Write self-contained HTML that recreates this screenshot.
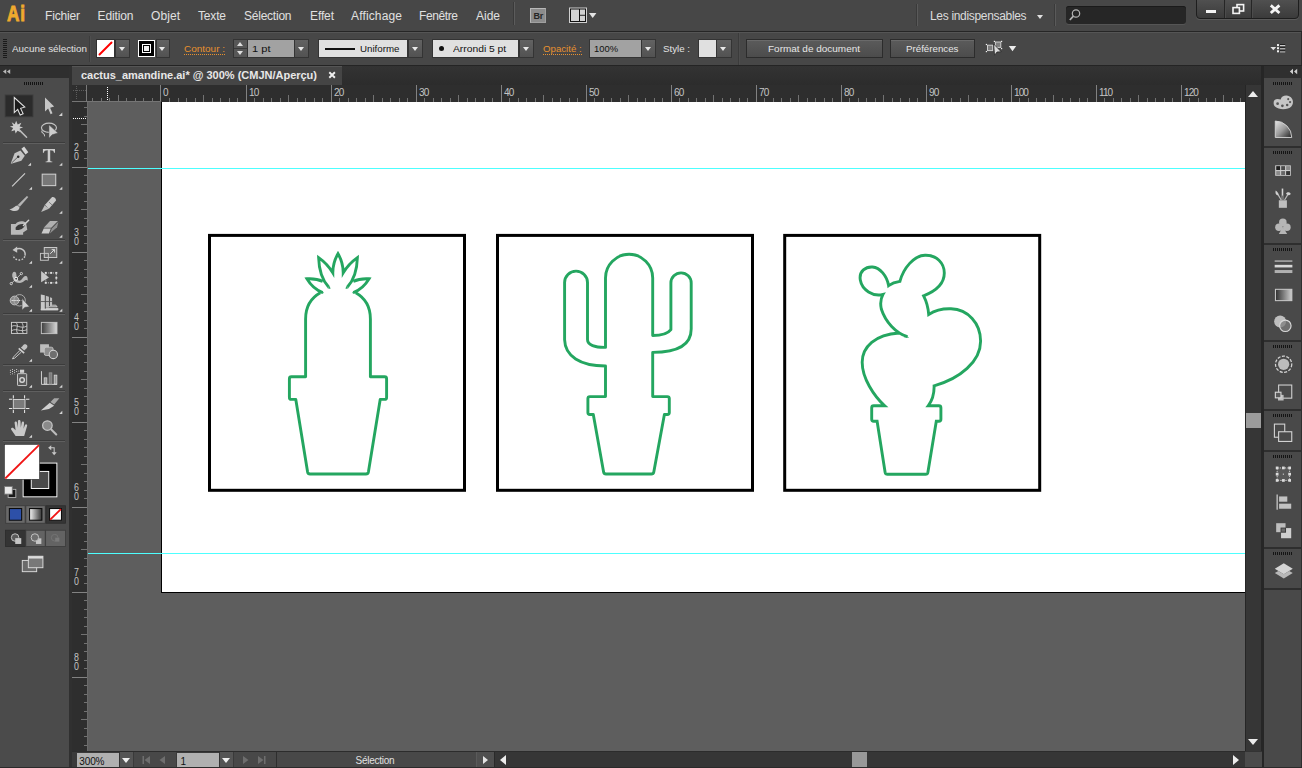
<!DOCTYPE html>
<html><head><meta charset="utf-8"><title>Ai</title>
<style>
*{box-sizing:border-box;margin:0;padding:0}
html,body{width:1302px;height:768px;overflow:hidden;background:#5e5e5e;font-family:"Liberation Sans",sans-serif;font-size:11px;color:#e6e6e6}
.a{position:absolute}
.tx{position:absolute;white-space:nowrap}
#menubar{left:0;top:0;width:1302px;height:31px;background:#474747}
#ctrl{left:0;top:31px;width:1302px;height:35px;background:#474747;border-top:1px solid #262626;border-bottom:1px solid #242424;box-shadow:inset 0 1px 0 #555}
.dd{position:absolute;background:#595959;border:1px solid #343434}
.dd{background:linear-gradient(#626262,#525252)}
.dd:after{content:"";position:absolute;left:50%;top:50%;margin-left:-3.8px;margin-top:-2px;border:3.8px solid transparent;border-top:4.6px solid #e8e8e8;border-bottom:none}
.fld{position:absolute;background:#a2a2a2;border:1px solid #343434}
.lfd{position:absolute;background:#e0e0e0;border:1px solid #343434}
.btn{position:absolute;background:linear-gradient(#5b5b5b,#4c4c4c);border:1px solid #2c2c2c;box-shadow:inset 0 1px 0 #6a6a6a}
.dot{position:absolute;border-bottom:1px dotted #e8912f;height:1px}
#tabbar{left:72px;top:66px;width:1190px;height:19px;background:linear-gradient(#333,#2c2c2c)}
#tab{left:72px;top:66px;width:270px;height:19px;background:#454545;border-top:1px solid #555}
#left{left:0;top:66px;width:69px;height:702px;background:#4b4b4b}
#lefthead{left:0;top:66px;width:69px;height:12px;background:#2f2f2f}
#lsep{left:69px;top:66px;width:3px;height:702px;background:#303030}
#hruler{left:72px;top:85px;width:1173px;height:17px;background:#2e2e2e;overflow:hidden}
#hruler i{position:absolute;width:1px;background:#727272}
#hruler i.M{background:#828282}
#hruler b{position:absolute;top:2px;font-weight:normal;font-size:10px;line-height:11px;color:#c4c4c4;letter-spacing:-0.9px}
#vruler{left:72px;top:102px;width:15px;height:649px;background:#2e2e2e;overflow:hidden}
#vruler i{position:absolute;height:1px;background:#727272}
#vruler i.M{background:#828282}
#vruler b{position:absolute;left:0.5px;width:7px;text-align:center;font-weight:normal;font-size:10px;line-height:10px;color:#c4c4c4;transform:scaleX(0.88)}
#canvas{left:87px;top:102px;width:1158px;height:649px;background:#5e5e5e;overflow:hidden}
#vscroll{left:1245px;top:85px;width:17px;height:666px;background:#363636;border-left:1px solid #262626}
#rsep{left:1261px;top:66px;width:3px;height:702px;background:#262626}
#right{left:1264px;top:66px;width:38px;height:702px;background:#494949;border-right:1px solid #2e2e2e}
#righthead{left:1264px;top:66px;width:38px;height:12px;background:#2f2f2f}
#status{left:72px;top:751px;width:1173px;height:17px;background:#3a3a3a;border-top:1px solid #2c2c2c}
.grip{position:absolute;height:3px;width:20px;background:repeating-linear-gradient(90deg,#141414 0,#141414 1px,transparent 1px,transparent 2px)}
.hl{position:absolute;height:1px;background:#5f5f5f;box-shadow:0 -1px 0 #3c3c3c}
.rs{position:absolute;left:1264px;width:38px;height:2px;background:#2e2e2e}
.cm{position:absolute;width:0;height:0;border:2.5px solid transparent;border-right-color:#d0d0d0;border-bottom-color:#d0d0d0}
svg{position:absolute;overflow:visible}
</style></head><body>
<div id="menubar" class="a"></div>
<div id="ctrl" class="a"></div>
<span class="tx" style="left:7px;top:2px;font-size:22px;line-height:24px;font-weight:bold;transform-origin:0 0;transform:scaleX(0.78);color:#eeaa2e;-webkit-text-stroke:0.9px #eeaa2e;letter-spacing:1px">Ai</span>
<div class="a" style="left:514px;top:2px;width:1px;height:23px;background:#5c5c5c;box-shadow:-1px 0 0 #3a3a3a"></div>
<div class="a" style="left:530px;top:8px;width:16px;height:15px;background:#8c8c8c;border:1px solid #b8b8b8;border-right-color:#a0a0a0;border-bottom-color:#a0a0a0"></div>
<span class="tx" style="left:533.5px;top:9.5px;font-size:9px;line-height:12px;font-weight:bold;color:#262626;letter-spacing:-0.3px">Br</span>
<svg width="30" height="18" viewBox="568 6 30 18" style="left:568px;top:6px">
<rect x="569.5" y="8" width="17" height="14.5" fill="#111" stroke="#d0d0d0" stroke-width="1"/>
<rect x="571" y="9.5" width="8" height="11.5" fill="#d2d2d2"/><rect x="580" y="9.5" width="5" height="5.3" fill="#d2d2d2"/><rect x="580" y="15.7" width="5" height="5.3" fill="#d2d2d2"/>
<path d="M589 13 L596.4 13 L592.7 18 Z" fill="#e4e4e4"/>
</svg>
<div class="a" style="left:917px;top:4px;width:1px;height:22px;background:#5a5a5a;box-shadow:-1px 0 0 #3a3a3a"></div>
<div class="a" style="left:1037px;top:15px;border:3.2px solid transparent;border-top:4px solid #e0e0e0;border-bottom:none"></div>
<div class="a" style="left:1055px;top:4px;width:1px;height:22px;background:#5a5a5a;box-shadow:-1px 0 0 #3a3a3a"></div>
<div class="a" style="left:1066px;top:6px;width:120px;height:18px;background:#262626;border-radius:3px;box-shadow:inset 0 1px 0 #1a1a1a,0 1px 0 #555"></div>
<svg width="14" height="14" viewBox="0 0 14 14" style="left:1068px;top:8px"><circle cx="8" cy="5.5" r="3.7" fill="none" stroke="#b4b4b4" stroke-width="1.2"/><path d="M5.4 8.2 L1.8 12" stroke="#b4b4b4" stroke-width="1.7"/></svg>
<div class="a" style="left:1196px;top:-1px;width:103px;height:20px;background:linear-gradient(#505050,#3b3b3b);border:1px solid #1e1e1e;border-radius:0 0 4px 4px;box-shadow:0 1px 0 #5a5a5a"></div>
<div class="a" style="left:1224px;top:0;width:1px;height:18px;background:#262626;box-shadow:1px 0 0 #4c4c4c"></div>
<div class="a" style="left:1251px;top:0;width:1px;height:18px;background:#262626;box-shadow:1px 0 0 #4c4c4c"></div>
<svg width="103" height="20" viewBox="1196 0 103 20" style="left:1196px;top:0">
<rect x="1206" y="10" width="10" height="3" fill="#f4f4f4"/>
<rect x="1237" y="4.6" width="6.6" height="6.4" fill="none" stroke="#f4f4f4" stroke-width="1.6"/>
<rect x="1233" y="7.6" width="6.4" height="5.8" fill="#444" stroke="#f4f4f4" stroke-width="1.6"/>
<path d="M1270.8 5.4 L1279.4 13 M1279.4 5.4 L1270.8 13" stroke="#f4f4f4" stroke-width="2.8"/>
</svg>
<!-- control bar right icons -->
<svg width="36" height="20" viewBox="984 38 36 20" style="left:984px;top:38px">
<rect x="987.5" y="45.2" width="5.2" height="5.4" fill="#7e7e7e" stroke="#cdcdcd" stroke-width="1"/>
<rect x="995.4" y="42" width="5.4" height="5.4" fill="#7e7e7e" stroke="#cdcdcd" stroke-width="1"/>
<g fill="#f0f0f0"><rect x="985.8" y="43.9" width="1.2" height="1.2"/><rect x="985.8" y="51" width="1.2" height="1.2"/><rect x="993.8" y="40.8" width="1.2" height="1.2"/><rect x="1001" y="40.8" width="1.2" height="1.2"/><rect x="1001" y="48" width="1.2" height="1.2"/></g>
<path d="M993.6 44 L1001.2 51.7 L997 52 L994.6 55.2 Z" fill="#dadada" stroke="#1e1e1e" stroke-width="0.7"/>
<path d="M1008.8 46 L1016.2 46 L1012.5 51.2 Z" fill="#ececec"/>
</svg>
<svg width="20" height="14" viewBox="1268 41 20 14" style="left:1268px;top:41px">
<path d="M1270.4 47 L1276.2 47 L1273.3 50.2 Z" fill="#e4e4e4"/>
<g fill="#f2f2f2"><rect x="1277" y="44.1" width="2" height="2"/><rect x="1277" y="47.2" width="2" height="2"/><rect x="1277" y="50.3" width="2" height="2"/>
<rect x="1280" y="45.1" width="5.2" height="1"/><rect x="1280" y="48.2" width="5.2" height="1"/><rect x="1280" y="51.3" width="5.2" height="1"/></g>
<g fill="#1c1c1c"><rect x="1280" y="44.1" width="5.2" height="1"/><rect x="1280" y="47.2" width="5.2" height="1"/><rect x="1280" y="50.3" width="5.2" height="1"/></g>
</svg>
<div class="a" style="left:1301px;top:32px;width:1px;height:33px;background:#2a2a2a"></div>

<div class="a" style="left:96px;top:39px;width:19px;height:19px;background:#fff;border:1px solid #303030"><svg width="17" height="17" style="left:0;top:0"><path d="M2.5 14.5 L14.5 2.5" stroke="#f00" stroke-width="2" stroke-linecap="round"/></svg></div>
<div class="dd" style="left:115px;top:39px;width:15px;height:19px"></div>
<div class="a" style="left:138px;top:40px;width:17px;height:17px;background:#000;border:1px solid #fff"><div class="a" style="left:3px;top:3px;width:9px;height:9px;border:1px solid #fff;background:#000"><div class="a" style="left:1px;top:1px;width:5px;height:5px;background:#eee"></div></div></div>
<div class="dd" style="left:156px;top:39px;width:14px;height:19px"></div>
<div class="dot" style="left:184px;top:54px;width:41px"></div>
<div class="a" style="left:233px;top:39px;width:15px;height:19px;background:#575757;border:1px solid #343434"><div class="a" style="left:3px;top:2px;border:3.5px solid transparent;border-bottom:4px solid #dedede;border-top:none"></div><div class="a" style="left:0;top:8px;width:13px;height:1px;background:#3a3a3a"></div><div class="a" style="left:3px;top:11px;border:3.5px solid transparent;border-top:4px solid #dedede;border-bottom:none"></div></div>
<div class="fld" style="left:247px;top:39px;width:48px;height:19px"></div>
<div class="dd" style="left:294px;top:39px;width:15px;height:19px"></div>
<div class="lfd" style="left:318px;top:39px;width:90px;height:19px"><div class="a" style="left:6px;top:7.5px;width:30px;height:2px;background:#111"></div></div>
<div class="dd" style="left:408px;top:39px;width:15px;height:19px"></div>
<div class="lfd" style="left:432px;top:39px;width:87px;height:19px"><div class="a" style="left:6px;top:6px;width:5px;height:5px;border-radius:3px;background:#111"></div></div>
<div class="dd" style="left:519px;top:39px;width:15px;height:19px"></div>
<div class="dot" style="left:543px;top:54px;width:39px"></div>
<div class="fld" style="left:589px;top:39px;width:53px;height:19px"></div>
<div class="dd" style="left:641px;top:39px;width:15px;height:19px"></div>
<div class="lfd" style="left:698px;top:39px;width:19px;height:19px"></div>
<div class="dd" style="left:716px;top:39px;width:16px;height:19px"></div>
<div class="a" style="left:738px;top:33px;width:1px;height:32px;background:#3b3b3b;box-shadow:1px 0 0 #4d4d4d"></div>
<div class="a" style="left:89px;top:36px;width:1px;height:26px;background:#3c3c3c;box-shadow:1px 0 0 #4e4e4e"></div>
<div class="btn" style="left:746px;top:39px;width:137px;height:19px"></div>
<div class="btn" style="left:890px;top:39px;width:85px;height:19px"></div>
<div class="a" style="left:3px;top:39px;width:4px;height:19px;background:repeating-linear-gradient(180deg,#1a1a1a 0,#1a1a1a 1px,transparent 1px,transparent 2px)"></div>
<div id="tabbar" class="a"></div><div id="tab" class="a"></div>
<svg width="9" height="9" style="left:328px;top:71px"><path d="M1.3 1.3 L6.9 6.7 M6.9 1.3 L1.3 6.7" stroke="#f0f0f0" stroke-width="1.9"/></svg>
<div id="left" class="a"></div><div id="lefthead" class="a"></div><div id="lsep" class="a"></div>
<div class="grip" style="left:24px;top:82px"></div>
<div class="hl" style="left:3px;top:143px;width:62px"></div>
<div class="hl" style="left:3px;top:240px;width:62px"></div>
<div class="hl" style="left:3px;top:314px;width:62px"></div>
<div class="hl" style="left:3px;top:365px;width:62px"></div>
<div class="hl" style="left:3px;top:391px;width:62px"></div>
<div class="hl" style="left:3px;top:441px;width:62px"></div>
<svg width="72" height="702" viewBox="0 66 72 702" style="left:0;top:66px">
<defs>
<linearGradient id="gv" x1="0" y1="0" x2="0" y2="1"><stop offset="0" stop-color="#dcdcdc"/><stop offset="1" stop-color="#a8a8a8"/></linearGradient>
<linearGradient id="gh" x1="0" y1="0" x2="1" y2="0"><stop offset="0" stop-color="#3c3c3c"/><stop offset="1" stop-color="#d8d8d8"/></linearGradient>
<linearGradient id="gh2" x1="0" y1="0" x2="1" y2="0"><stop offset="0" stop-color="#f4f4f4"/><stop offset="1" stop-color="#333"/></linearGradient>
</defs>
<!-- Block A origin (0,64) -->
<g transform="translate(0,64) scale(0.1041667)">
<path d="M28 73 L60 50 L60 96 Z M66 73 L98 50 L98 96 Z" fill="#b8b8b8"/>
<rect x="50" y="298" width="266" height="208" fill="#2b2b2b" stroke="#3a3a3a" stroke-width="9"/>
<path d="M137 322 L137 466 L170 436 L194 490 L222 478 L198 426 L238 414 Z" fill="#1c1c1c" stroke="#e2e2e2" stroke-width="10" stroke-linejoin="miter"/>
<path d="M432 322 L432 456 L462 428 L486 482 L504 472 L481 420 L520 408 Z" fill="#c6c6c6"/>
<path d="M598 466 L598 499 L565 499 Z" fill="#d4d4d4"/>
<!-- magic wand -->
<path d="M155 545 L170 580 L205 565 L188 600 L222 608 L188 622 L200 655 L168 640 L150 668 L142 636 L108 645 L126 615 L95 600 L128 592 L112 560 L142 578 Z" fill="#cfcfcf"/>
<path d="M192 640 L255 703" stroke="#bdbdbd" stroke-width="15" stroke-linecap="round"/>
<!-- lasso -->
<ellipse cx="470" cy="612" rx="72" ry="44" fill="none" stroke="#c4c4c4" stroke-width="11"/>
<path d="M402 640 C390 668 436 658 428 694" fill="none" stroke="#c4c4c4" stroke-width="10"/>
<path d="M470 584 L470 712 L500 680 L556 662 Z" fill="#cdcdcd" stroke="#4f4f4f" stroke-width="5"/>
</g>
<!-- Block B origin (0,140) -->
<g transform="translate(0,140) scale(0.1041667)">
<!-- pen -->
<path d="M205 85 L232 62 L272 118 L245 138 Z" fill="#d4d4d4"/>
<path d="M196 100 L238 150 L205 200 L108 228 L104 222 L140 128 Z" fill="#c4c4c4"/>
<path d="M112 220 L172 162" stroke="#3a3a3a" stroke-width="7"/>
<circle cx="175" cy="160" r="12" fill="#2e2e2e"/>
<path d="M298 218 L298 248 L268 248 Z" fill="#d4d4d4"/>
<!-- T -->
<path d="M412 86 L528 86 L528 122 L518 122 C516 104 508 98 482 98 L482 196 C482 204 490 206 502 207 L502 213 L438 213 L438 207 C450 206 458 204 458 196 L458 98 C432 98 424 104 422 122 L412 122 Z" fill="#cdcdcd"/>
<path d="M598 218 L598 248 L568 248 Z" fill="#d4d4d4"/>
<!-- line -->
<path d="M116 446 L240 320" stroke="#d0d0d0" stroke-width="11"/>
<path d="M308 448 L308 478 L278 478 Z" fill="#d4d4d4"/>
<!-- rect -->
<rect x="405" y="328" width="130" height="110" fill="#787878" stroke="#cfcfcf" stroke-width="10"/>
<path d="M598 448 L598 478 L568 478 Z" fill="#d4d4d4"/>
<!-- brush -->
<path d="M258 538 L272 548 L190 640 L170 625 Z" fill="#b4b4b4"/>
<path d="M170 628 L188 648 C180 690 130 690 90 664 C130 660 140 630 170 628 Z" fill="#c8c8c8"/>
<!-- pencil -->
<path d="M500 548 C515 540 540 560 538 580 L470 660 L430 625 Z" fill="#c9c9c9"/>
<path d="M470 596 L505 628" stroke="#555" stroke-width="6"/>
<path d="M430 625 L470 660 L395 692 Z" fill="#bcbcbc"/>
<path d="M448 640 L425 620" stroke="#555" stroke-width="5"/>
<path d="M598 678 L598 708 L568 708 Z" fill="#d4d4d4"/>
</g>
<!-- Block C origin (0,214) -->
<g transform="translate(0,214) scale(0.1041667)">
<!-- blob brush -->
<path d="M105 95 L150 95 C170 70 215 60 250 85 L262 150 L222 178 L222 198 L105 198 Z" fill="#b9b9b9"/>
<path d="M150 130 C170 95 215 90 240 100 C235 140 185 160 150 150 Z" fill="#3a3a3a"/>
<path d="M225 110 L275 60" stroke="#d0d0d0" stroke-width="14" stroke-linecap="round"/>
<!-- eraser -->
<path d="M398 188 L420 140 L488 140 L470 188 Z" fill="#c9c9c9"/>
<path d="M420 132 L480 68 L556 68 L492 132 Z" fill="#b0b0b0"/>
<path d="M478 186 L498 138 L560 76 L548 128 Z" fill="#909090"/>
<path d="M598 198 L598 228 L568 228 Z" fill="#d4d4d4"/>
<!-- rotate -->
<path d="M150 340 C200 315 250 350 240 400" fill="none" stroke="#c6c6c6" stroke-width="14"/>
<path d="M120 345 L165 312 L165 372 Z" fill="#c6c6c6"/>
<path d="M238 405 C225 450 150 462 122 395" fill="none" stroke="#c6c6c6" stroke-width="14" stroke-dasharray="16 14"/>
<path d="M308 448 L308 478 L278 478 Z" fill="#d4d4d4"/>
<!-- scale -->
<rect x="425" y="322" width="120" height="96" fill="#6a6a6a" stroke="#d0d0d0" stroke-width="9"/>
<rect x="388" y="378" width="76" height="66" fill="none" stroke="#c8c8c8" stroke-width="9"/>
<path d="M482 382 L522 342 M496 342 L524 342 L524 370" stroke="#e0e0e0" stroke-width="9" fill="none"/>
<path d="M598 448 L598 478 L568 478 Z" fill="#d4d4d4"/>
<!-- warp/width -->
<path d="M118 600 C112 560 135 545 150 560 C165 580 150 640 185 640 C215 640 215 600 245 595 C262 593 268 612 266 640 C240 620 235 660 190 662 C160 662 140 650 130 630 Z" fill="#b8b8b8"/>
<path d="M108 668 L205 572" stroke="#e0e0e0" stroke-width="7"/>
<circle cx="108" cy="668" r="11" fill="#4f4f4f" stroke="#f0f0f0" stroke-width="7"/>
<circle cx="205" cy="572" r="11" fill="#4f4f4f" stroke="#f0f0f0" stroke-width="7"/>
<circle cx="155" cy="622" r="14" fill="#4b4b4b" stroke="#fff" stroke-width="9"/>
<path d="M308 678 L308 708 L278 708 Z" fill="#d4d4d4"/>
<!-- free transform -->
<path d="M395 548 L395 655 L470 610 Z" fill="#c8c8c8"/>
<rect x="440" y="566" width="100" height="95" fill="none" stroke="#d0d0d0" stroke-width="8" stroke-dasharray="12 10"/>
<g fill="#e0e0e0"><rect x="430" y="556" width="18" height="18"/><rect x="482" y="556" width="18" height="18"/><rect x="532" y="556" width="18" height="18"/><rect x="532" y="604" width="18" height="18"/><rect x="430" y="652" width="18" height="18"/><rect x="482" y="652" width="18" height="18"/><rect x="532" y="652" width="18" height="18"/></g>
</g>
<!-- Block D origin (0,288) -->
<g transform="translate(0,288) scale(0.1041667)">
<!-- shape builder -->
<circle cx="140" cy="120" r="42" fill="#8a8a8a" stroke="#c4c4c4" stroke-width="9"/>
<circle cx="188" cy="118" r="55" fill="none" stroke="#b0b0b0" stroke-width="9"/>
<path d="M112 120 L205 120" stroke="#fff" stroke-width="9" stroke-dasharray="10 8"/>
<path d="M212 100 L212 212 L240 185 L282 180 Z" fill="#d0d0d0" stroke="#4f4f4f" stroke-width="5"/>
<path d="M308 198 L308 228 L278 228 Z" fill="#d4d4d4"/>
<!-- perspective grid -->
<path d="M392 62 L430 70 L430 210 L392 210 Z" fill="#c8c8c8"/>
<path d="M440 74 L470 84 L470 190 L440 190 Z M480 88 L500 96 L500 172 L480 172 Z" fill="#bcbcbc"/>
<path d="M392 130 L500 130" stroke="#4f4f4f" stroke-width="8"/>
<path d="M392 210 L556 210 L556 196 L440 196 M470 180 L548 180 L536 165 L500 165" fill="none" stroke="#d4d4d4" stroke-width="9"/>
<path d="M392 198 L556 198 L556 212 L392 212 Z" fill="#d0d0d0"/>
<path d="M598 198 L598 228 L568 228 Z" fill="#d4d4d4"/>
<!-- mesh -->
<rect x="110" y="330" width="148" height="106" fill="#3c3c3c" stroke="#cfcfcf" stroke-width="9"/>
<path d="M110 370 C150 340 200 400 258 365 M110 410 C160 380 200 430 258 400 M150 330 C190 360 140 400 170 436 M205 330 C245 365 195 400 225 436" fill="none" stroke="#d8d8d8" stroke-width="8"/>
<!-- gradient -->
<rect x="397" y="330" width="150" height="108" fill="url(#gh)" stroke="#c4c4c4" stroke-width="9"/>
<!-- eyedropper -->
<path d="M215 560 C225 535 255 535 262 555 C268 575 245 590 232 600 L200 572 Z" fill="#c2c2c2"/>
<path d="M180 580 L232 625" stroke="#d0d0d0" stroke-width="16"/>
<path d="M190 600 L130 662 L120 680 L140 674 L205 615" fill="none" stroke="#e0e0e0" stroke-width="8"/>
<path d="M308 678 L308 708 L278 708 Z" fill="#d4d4d4"/>
<!-- blend -->
<rect x="385" y="540" width="85" height="80" fill="#bdbdbd"/>
<rect x="425" y="568" width="85" height="80" rx="18" fill="#8e8e8e" stroke="#c9c9c9" stroke-width="8"/>
<circle cx="512" cy="638" r="40" fill="#6e6e6e" stroke="#d2d2d2" stroke-width="10"/>
</g>
<!-- Block E origin (0,362) -->
<g transform="translate(0,362) scale(0.1041667)">
<!-- symbol sprayer -->
<g fill="#e6e6e6"><circle cx="100" cy="80" r="5"/><circle cx="120" cy="72" r="5"/><circle cx="140" cy="80" r="5"/><circle cx="160" cy="72" r="5"/><circle cx="100" cy="98" r="5"/><circle cx="120" cy="90" r="5"/><circle cx="140" cy="98" r="5"/><circle cx="160" cy="92" r="5"/><circle cx="180" cy="86" r="5"/><circle cx="120" cy="112" r="5"/><circle cx="100" cy="118" r="4"/><circle cx="142" cy="116" r="4"/></g>
<rect x="192" y="74" width="40" height="30" fill="#cfcfcf"/>
<rect x="168" y="112" width="88" height="114" rx="6" fill="#5a5a5a" stroke="#cdcdcd" stroke-width="9"/>
<circle cx="212" cy="172" r="22" fill="none" stroke="#d8d8d8" stroke-width="14"/>
<path d="M308 218 L308 248 L278 248 Z" fill="#d4d4d4"/>
<!-- graph -->
<path d="M398 88 L398 215 L548 215" fill="none" stroke="#d8d8d8" stroke-width="9"/>
<rect x="424" y="152" width="26" height="60" fill="#9a9a9a" stroke="#dcdcdc" stroke-width="7"/>
<rect x="472" y="104" width="26" height="108" fill="#7c7c7c" stroke="#9c9c9c" stroke-width="7"/>
<rect x="520" y="126" width="26" height="86" fill="#9a9a9a" stroke="#dcdcdc" stroke-width="7"/>
<path d="M598 218 L598 248 L568 248 Z" fill="#d4d4d4"/>
<!-- artboard -->
<rect x="128" y="360" width="112" height="86" fill="#7a7a7a" stroke="#d4d4d4" stroke-width="9"/>
<path d="M128 318 L128 350 M236 318 L236 350 M128 458 L128 490 M236 458 L236 490 M86 358 L118 358 M250 358 L282 358 M86 446 L118 446 M250 446 L282 446" stroke="#e8e8e8" stroke-width="10"/>
<!-- slice -->
<path d="M392 466 L478 392 L520 420 L470 452 Z" fill="#d0d0d0"/>
<path d="M485 385 L520 348 L570 348 L520 408 Z" fill="#a6a6a6"/>
<path d="M598 468 L598 498 L568 498 Z" fill="#d4d4d4"/>
<!-- hand -->
<path d="M150 710 L112 655 C100 640 108 625 125 632 L150 655 L140 585 C138 568 160 565 164 582 L172 630 L172 570 C172 552 196 552 197 570 L200 630 L208 582 C212 566 234 570 231 588 L226 640 L240 605 C246 590 266 598 260 615 L232 710 Z" fill="#c8c8c8"/>
<path d="M308 698 L308 728 L278 728 Z" fill="#d4d4d4"/>
<!-- zoom -->
<circle cx="455" cy="610" r="46" fill="#8a8a8a" stroke="#c4c4c4" stroke-width="12"/>
<path d="M492 648 L540 696" stroke="#bcbcbc" stroke-width="20" stroke-linecap="round"/>
</g>
<!-- Block F origin (0,436) -->
<g transform="translate(0,436) scale(0.1041667)">
<rect x="222" y="260" width="324" height="324" fill="#000" stroke="#fff" stroke-width="9"/>
<rect x="300" y="340" width="168" height="164" fill="#4b4b4b" stroke="#fff" stroke-width="9"/>
<rect x="42" y="80" width="338" height="336" fill="#fff" stroke="#2a2a2a" stroke-width="6"/>
<path d="M50 408 L374 88" stroke="#f01414" stroke-width="17"/>
<!-- swap -->
<path d="M478 112 L520 112 L520 165" fill="none" stroke="#c8c8c8" stroke-width="10"/>
<path d="M462 112 L492 88 L492 136 Z M520 185 L496 155 L544 155 Z" fill="#c8c8c8"/>
<!-- default -->
<rect x="78" y="512" width="74" height="78" fill="#1a1a1a" stroke="#bbb" stroke-width="8"/>
<rect x="44" y="484" width="74" height="74" fill="#e8e8e8" stroke="#777" stroke-width="8"/>
</g>
<!-- Block G origin (0,500) -->
<g transform="translate(0,500) scale(0.1041667)">
<rect x="55" y="55" width="186" height="168" fill="#6a6a6a" stroke="#3a3a3a" stroke-width="8"/>
<rect x="248" y="55" width="186" height="168" fill="#6a6a6a" stroke="#3a3a3a" stroke-width="8"/>
<rect x="441" y="55" width="188" height="168" fill="#353535" stroke="#2d2d2d" stroke-width="8"/>
<rect x="90" y="82" width="118" height="112" fill="#2d50a8" stroke="#0a0a0a" stroke-width="10"/>
<rect x="284" y="82" width="118" height="112" fill="url(#gh2)" stroke="#0a0a0a" stroke-width="10"/>
<rect x="476" y="82" width="114" height="112" fill="#fff" stroke="#0a0a0a" stroke-width="10"/>
<path d="M482 188 L585 88" stroke="#f01414" stroke-width="18"/>
<rect x="52" y="290" width="192" height="156" fill="#343434" stroke="#2c2c2c" stroke-width="8"/>
<rect x="248" y="290" width="186" height="156" fill="#636363" stroke="#3c3c3c" stroke-width="8"/>
<rect x="438" y="290" width="190" height="156" fill="#636363" stroke="#3c3c3c" stroke-width="8"/>
<circle cx="145" cy="360" r="36" fill="#5a5a5a" stroke="#c8c8c8" stroke-width="9"/>
<rect x="146" y="366" width="58" height="56" fill="#c6c6c6"/>
<rect x="345" y="368" width="52" height="54" fill="#c6c6c6"/>
<circle cx="335" cy="360" r="36" fill="#6e6e6e" stroke="#c8c8c8" stroke-width="9"/>
<circle cx="525" cy="362" r="32" fill="none" stroke="#747474" stroke-width="9"/>
<rect x="530" y="362" width="40" height="38" fill="#7a7a7a"/>
<!-- screen mode -->
<rect x="214" y="580" width="138" height="108" fill="#6a6a6a" stroke="#dcdcdc" stroke-width="9"/>
<rect x="272" y="540" width="140" height="110" fill="#787878" stroke="#dcdcdc" stroke-width="9"/>
<rect x="272" y="540" width="140" height="22" fill="#dcdcdc"/>
</g>
</svg>

<div id="hruler" class="a"><i style="left:20px;top:13px;height:4px"></i><i style="left:29px;top:13px;height:4px"></i><i style="left:37px;top:13px;height:4px"></i><i style="left:46px;top:10px;height:7px"></i><i style="left:54px;top:13px;height:4px"></i><i style="left:63px;top:13px;height:4px"></i><i style="left:71px;top:13px;height:4px"></i><i style="left:80px;top:13px;height:4px"></i><i class="M" style="left:88px;top:0px;height:17px"></i><b style="left:91px">0</b><i style="left:97px;top:13px;height:4px"></i><i style="left:106px;top:13px;height:4px"></i><i style="left:114px;top:13px;height:4px"></i><i style="left:123px;top:13px;height:4px"></i><i style="left:131px;top:10px;height:7px"></i><i style="left:140px;top:13px;height:4px"></i><i style="left:148px;top:13px;height:4px"></i><i style="left:157px;top:13px;height:4px"></i><i style="left:165px;top:13px;height:4px"></i><i class="M" style="left:174px;top:0px;height:17px"></i><b style="left:177px">10</b><i style="left:182px;top:13px;height:4px"></i><i style="left:191px;top:13px;height:4px"></i><i style="left:199px;top:13px;height:4px"></i><i style="left:208px;top:13px;height:4px"></i><i style="left:216px;top:10px;height:7px"></i><i style="left:225px;top:13px;height:4px"></i><i style="left:233px;top:13px;height:4px"></i><i style="left:242px;top:13px;height:4px"></i><i style="left:250px;top:13px;height:4px"></i><i class="M" style="left:259px;top:0px;height:17px"></i><b style="left:262px">20</b><i style="left:267px;top:13px;height:4px"></i><i style="left:276px;top:13px;height:4px"></i><i style="left:284px;top:13px;height:4px"></i><i style="left:293px;top:13px;height:4px"></i><i style="left:301px;top:10px;height:7px"></i><i style="left:310px;top:13px;height:4px"></i><i style="left:318px;top:13px;height:4px"></i><i style="left:327px;top:13px;height:4px"></i><i style="left:335px;top:13px;height:4px"></i><i class="M" style="left:344px;top:0px;height:17px"></i><b style="left:347px">30</b><i style="left:352px;top:13px;height:4px"></i><i style="left:361px;top:13px;height:4px"></i><i style="left:369px;top:13px;height:4px"></i><i style="left:378px;top:13px;height:4px"></i><i style="left:386px;top:10px;height:7px"></i><i style="left:395px;top:13px;height:4px"></i><i style="left:403px;top:13px;height:4px"></i><i style="left:412px;top:13px;height:4px"></i><i style="left:420px;top:13px;height:4px"></i><i class="M" style="left:429px;top:0px;height:17px"></i><b style="left:432px">40</b><i style="left:437px;top:13px;height:4px"></i><i style="left:446px;top:13px;height:4px"></i><i style="left:454px;top:13px;height:4px"></i><i style="left:463px;top:13px;height:4px"></i><i style="left:471px;top:10px;height:7px"></i><i style="left:480px;top:13px;height:4px"></i><i style="left:488px;top:13px;height:4px"></i><i style="left:497px;top:13px;height:4px"></i><i style="left:505px;top:13px;height:4px"></i><i class="M" style="left:514px;top:0px;height:17px"></i><b style="left:517px">50</b><i style="left:522px;top:13px;height:4px"></i><i style="left:531px;top:13px;height:4px"></i><i style="left:539px;top:13px;height:4px"></i><i style="left:548px;top:13px;height:4px"></i><i style="left:556px;top:10px;height:7px"></i><i style="left:565px;top:13px;height:4px"></i><i style="left:573px;top:13px;height:4px"></i><i style="left:582px;top:13px;height:4px"></i><i style="left:590px;top:13px;height:4px"></i><i class="M" style="left:599px;top:0px;height:17px"></i><b style="left:602px">60</b><i style="left:607px;top:13px;height:4px"></i><i style="left:616px;top:13px;height:4px"></i><i style="left:624px;top:13px;height:4px"></i><i style="left:633px;top:13px;height:4px"></i><i style="left:641px;top:10px;height:7px"></i><i style="left:650px;top:13px;height:4px"></i><i style="left:658px;top:13px;height:4px"></i><i style="left:667px;top:13px;height:4px"></i><i style="left:675px;top:13px;height:4px"></i><i class="M" style="left:684px;top:0px;height:17px"></i><b style="left:687px">70</b><i style="left:692px;top:13px;height:4px"></i><i style="left:701px;top:13px;height:4px"></i><i style="left:709px;top:13px;height:4px"></i><i style="left:718px;top:13px;height:4px"></i><i style="left:726px;top:10px;height:7px"></i><i style="left:735px;top:13px;height:4px"></i><i style="left:743px;top:13px;height:4px"></i><i style="left:752px;top:13px;height:4px"></i><i style="left:760px;top:13px;height:4px"></i><i class="M" style="left:769px;top:0px;height:17px"></i><b style="left:772px">80</b><i style="left:777px;top:13px;height:4px"></i><i style="left:786px;top:13px;height:4px"></i><i style="left:794px;top:13px;height:4px"></i><i style="left:803px;top:13px;height:4px"></i><i style="left:811px;top:10px;height:7px"></i><i style="left:820px;top:13px;height:4px"></i><i style="left:828px;top:13px;height:4px"></i><i style="left:837px;top:13px;height:4px"></i><i style="left:845px;top:13px;height:4px"></i><i class="M" style="left:854px;top:0px;height:17px"></i><b style="left:857px">90</b><i style="left:862px;top:13px;height:4px"></i><i style="left:871px;top:13px;height:4px"></i><i style="left:879px;top:13px;height:4px"></i><i style="left:888px;top:13px;height:4px"></i><i style="left:896px;top:10px;height:7px"></i><i style="left:905px;top:13px;height:4px"></i><i style="left:913px;top:13px;height:4px"></i><i style="left:922px;top:13px;height:4px"></i><i style="left:930px;top:13px;height:4px"></i><i class="M" style="left:939px;top:0px;height:17px"></i><b style="left:942px">100</b><i style="left:947px;top:13px;height:4px"></i><i style="left:956px;top:13px;height:4px"></i><i style="left:964px;top:13px;height:4px"></i><i style="left:973px;top:13px;height:4px"></i><i style="left:981px;top:10px;height:7px"></i><i style="left:990px;top:13px;height:4px"></i><i style="left:998px;top:13px;height:4px"></i><i style="left:1007px;top:13px;height:4px"></i><i style="left:1015px;top:13px;height:4px"></i><i class="M" style="left:1024px;top:0px;height:17px"></i><b style="left:1027px">110</b><i style="left:1032px;top:13px;height:4px"></i><i style="left:1041px;top:13px;height:4px"></i><i style="left:1049px;top:13px;height:4px"></i><i style="left:1058px;top:13px;height:4px"></i><i style="left:1066px;top:10px;height:7px"></i><i style="left:1075px;top:13px;height:4px"></i><i style="left:1083px;top:13px;height:4px"></i><i style="left:1092px;top:13px;height:4px"></i><i style="left:1100px;top:13px;height:4px"></i><i class="M" style="left:1109px;top:0px;height:17px"></i><b style="left:1112px">120</b><i style="left:1117px;top:13px;height:4px"></i><i style="left:1126px;top:13px;height:4px"></i><i style="left:1134px;top:13px;height:4px"></i><i style="left:1143px;top:13px;height:4px"></i><i style="left:1151px;top:10px;height:7px"></i><i style="left:1160px;top:13px;height:4px"></i><i style="left:1168px;top:13px;height:4px"></i></div>
<div id="vruler" class="a"><i style="top:5px;left:12px;width:3px"></i><i style="top:14px;left:12px;width:3px"></i><i style="top:22px;left:9px;width:6px"></i><i style="top:31px;left:12px;width:3px"></i><i style="top:39px;left:12px;width:3px"></i><i style="top:48px;left:12px;width:3px"></i><i style="top:56px;left:12px;width:3px"></i><i class="M" style="top:65px;left:0px;width:15px"></i><b style="top:40.5px">2</b><b style="top:50.3px">0</b><i style="top:73px;left:12px;width:3px"></i><i style="top:82px;left:12px;width:3px"></i><i style="top:90px;left:12px;width:3px"></i><i style="top:99px;left:12px;width:3px"></i><i style="top:107px;left:9px;width:6px"></i><i style="top:116px;left:12px;width:3px"></i><i style="top:124px;left:12px;width:3px"></i><i style="top:133px;left:12px;width:3px"></i><i style="top:141px;left:12px;width:3px"></i><i class="M" style="top:150px;left:0px;width:15px"></i><b style="top:125.5px">3</b><b style="top:135.3px">0</b><i style="top:158px;left:12px;width:3px"></i><i style="top:167px;left:12px;width:3px"></i><i style="top:175px;left:12px;width:3px"></i><i style="top:184px;left:12px;width:3px"></i><i style="top:192px;left:9px;width:6px"></i><i style="top:201px;left:12px;width:3px"></i><i style="top:209px;left:12px;width:3px"></i><i style="top:218px;left:12px;width:3px"></i><i style="top:226px;left:12px;width:3px"></i><i class="M" style="top:235px;left:0px;width:15px"></i><b style="top:210.5px">4</b><b style="top:220.3px">0</b><i style="top:243px;left:12px;width:3px"></i><i style="top:252px;left:12px;width:3px"></i><i style="top:260px;left:12px;width:3px"></i><i style="top:269px;left:12px;width:3px"></i><i style="top:277px;left:9px;width:6px"></i><i style="top:286px;left:12px;width:3px"></i><i style="top:294px;left:12px;width:3px"></i><i style="top:303px;left:12px;width:3px"></i><i style="top:311px;left:12px;width:3px"></i><i class="M" style="top:320px;left:0px;width:15px"></i><b style="top:295.5px">5</b><b style="top:305.3px">0</b><i style="top:328px;left:12px;width:3px"></i><i style="top:337px;left:12px;width:3px"></i><i style="top:345px;left:12px;width:3px"></i><i style="top:354px;left:12px;width:3px"></i><i style="top:362px;left:9px;width:6px"></i><i style="top:371px;left:12px;width:3px"></i><i style="top:379px;left:12px;width:3px"></i><i style="top:388px;left:12px;width:3px"></i><i style="top:396px;left:12px;width:3px"></i><i class="M" style="top:405px;left:0px;width:15px"></i><b style="top:380.5px">6</b><b style="top:390.3px">0</b><i style="top:413px;left:12px;width:3px"></i><i style="top:422px;left:12px;width:3px"></i><i style="top:430px;left:12px;width:3px"></i><i style="top:439px;left:12px;width:3px"></i><i style="top:447px;left:9px;width:6px"></i><i style="top:456px;left:12px;width:3px"></i><i style="top:464px;left:12px;width:3px"></i><i style="top:473px;left:12px;width:3px"></i><i style="top:481px;left:12px;width:3px"></i><i class="M" style="top:490px;left:0px;width:15px"></i><b style="top:465.5px">7</b><b style="top:475.3px">0</b><i style="top:498px;left:12px;width:3px"></i><i style="top:507px;left:12px;width:3px"></i><i style="top:515px;left:12px;width:3px"></i><i style="top:524px;left:12px;width:3px"></i><i style="top:532px;left:9px;width:6px"></i><i style="top:541px;left:12px;width:3px"></i><i style="top:549px;left:12px;width:3px"></i><i style="top:558px;left:12px;width:3px"></i><i style="top:566px;left:12px;width:3px"></i><i class="M" style="top:575px;left:0px;width:15px"></i><b style="top:550.5px">8</b><b style="top:560.3px">0</b><i style="top:583px;left:12px;width:3px"></i><i style="top:592px;left:12px;width:3px"></i><i style="top:600px;left:12px;width:3px"></i><i style="top:609px;left:12px;width:3px"></i><i style="top:617px;left:9px;width:6px"></i><i style="top:626px;left:12px;width:3px"></i><i style="top:634px;left:12px;width:3px"></i><i style="top:643px;left:12px;width:3px"></i></div>
<div class="a" style="left:72px;top:101px;width:89px;height:1px;background:#757575"></div>
<div class="a" style="left:72px;top:85px;width:15px;height:17px;background:#2e2e2e;border-bottom:1px solid #757575;border-right:1px solid #7a7a7a"><div class="a" style="left:4px;top:1px;width:1px;height:14px;background:repeating-linear-gradient(180deg,#5c5c5c 0,#5c5c5c 1px,transparent 1px,transparent 2px)"></div><div class="a" style="left:1px;top:5px;width:14px;height:1px;background:repeating-linear-gradient(90deg,#5c5c5c 0,#5c5c5c 1px,transparent 1px,transparent 2px)"></div></div>
<div class="a" style="left:107px;top:87px;width:1px;height:13px;background:repeating-linear-gradient(180deg,#fff 0,#fff 1px,transparent 1px,transparent 2px)"></div>
<div class="a" style="left:73px;top:118px;width:14px;height:1px;background:repeating-linear-gradient(90deg,#fff 0,#fff 1px,transparent 1px,transparent 2px)"></div>
<div id="canvas" class="a">
<div class="a" style="left:74px;top:-5px;width:1100px;height:496px;background:#fff;border-left:1px solid #000;border-bottom:1px solid #000"></div>
<svg width="1158" height="649" viewBox="87 102 1158 649" style="left:0;top:0"><rect x="209.5" y="235.4" width="255" height="254.9" fill="none" stroke="#000" stroke-width="3"/>
<rect x="497.5" y="235.4" width="255" height="254.9" fill="none" stroke="#000" stroke-width="3"/>
<rect x="784.7" y="235.4" width="255" height="254.9" fill="none" stroke="#000" stroke-width="3"/>
<path fill="none" stroke="#24a660" stroke-width="2.9" stroke-linejoin="round" stroke-linecap="butt" d="M320.3 292.8 C311 298 305.6 307 305.6 319 L305.6 376.8 L291.4 376.8 Q289.4 376.8 289.4 378.8 L289.4 397.4 Q289.4 399.4 291.4 399.4 L295.8 399.4 L307.6 472 Q308 474 310 474 L366 474 Q368 474 368.4 472 L380.2 399.4 L384.6 399.4 Q386.6 399.4 386.6 397.4 L386.6 378.8 Q386.6 376.8 384.6 376.8 L370.4 376.8 L370.4 319 C370.4 307 365 298 355.7 292.8"/>
<path fill="none" stroke="#24a660" stroke-width="2.9" stroke-linejoin="miter" stroke-miterlimit="10" stroke-linecap="butt" d="M 328.58 287.09 C 323.07 281.00 318.97 271.63 318.62 257.57 C 323.66 261.09 328.93 266.36 332.80 272.80 C 332.80 266.36 334.79 259.33 338.00 253.59 C 341.23 259.33 343.22 266.36 343.22 272.80 C 347.09 266.36 352.36 261.09 357.40 257.57 C 357.05 271.63 352.95 281.00 347.44 287.09"/>
<path fill="none" stroke="#24a660" stroke-width="2.9" stroke-linejoin="miter" stroke-miterlimit="10" stroke-linecap="butt" d="M 322.72 292.60 C 317.22 290.61 311.36 286.27 306.91 278.78 C 312.53 278.43 318.39 279.25 322.72 281.35"/>
<path fill="#24a660" d="M 327.41 288.15 L 329.87 286.04 L 330.45 288.97 Z"/>
<path fill="#24a660" d="M 322.25 291.19 L 323.89 292.72 L 322.25 294.12 Z"/>
<path fill="none" stroke="#24a660" stroke-width="2.9" stroke-linejoin="miter" stroke-miterlimit="10" stroke-linecap="butt" d="M 353.28 292.60 C 358.78 290.61 364.64 286.27 369.09 278.78 C 363.47 278.43 357.61 279.25 353.28 281.35"/>
<path fill="#24a660" d="M 348.59 288.15 L 346.13 286.04 L 345.55 288.97 Z"/>
<path fill="#24a660" d="M 353.75 291.19 L 352.11 292.72 L 353.75 294.12 Z"/>
<path fill="none" stroke="#24a660" stroke-width="2.9" stroke-linejoin="round" stroke-linecap="butt" d="M605.5 347.4 C595 347.6 587.5 345 587.5 339.5 L587.5 282.6 A11.45 11.45 0 0 0 564.6 282.6 L564.6 339.8 C565 356 580 366 605.5 366 L605.5 396.6 L589.9 396.6 Q587.9 396.6 587.9 398.6 L587.9 412.5 Q587.9 414.5 589.9 414.5 L593.3 414.5 L603.6 472 Q604 474 606 474 L651.4 474 Q653.4 474 653.8 472 L664.4 414.5 L667.3 414.5 Q669.3 414.5 669.3 412.5 L669.3 398.6 Q669.3 396.6 667.3 396.6 L652.7 396.6 L652.7 352.4 C678 352.4 691.2 345 691.2 329 L691.2 283 A10.15 10.15 0 0 0 670.9 283 L670.9 329.6 C668 333.5 662 335.5 652.7 335.5 L652.7 277.9 A23.6 23.6 0 0 0 605.5 277.9 Z"/>
<path fill="none" stroke="#24a660" stroke-width="2.9" stroke-linejoin="miter" stroke-miterlimit="10" stroke-linecap="butt" d="M907.5 336.7 C896 333.5 885.5 322 881.3 309 C880 303 881 298 883 294.4 C873 297 862 290 860.3 280 C858.8 271 866 266.5 872.5 267 C880 267.5 887 276 888.6 285.6 C891.5 283.5 895.5 282 899.9 281.4 C903.5 268 914 255.5 925 255.2 C936.5 254.8 944.3 263 944.3 273 C944.3 283 936 291 923.6 295.8 C926.3 301 928.2 307.5 928.7 314.4 C935.5 310.2 943.5 308.5 951 308.8 C968 309.5 980.5 323 980.6 341 C980.7 361.5 960 378.5 934.1 385.8 C934.3 393 932.5 400 928.2 405.8 L938.9 405.8 Q940.9 405.8 940.9 407.8 L940.9 419.3 Q940.9 421.3 938.9 421.3 L936.3 421.3 L927.9 472.3 Q927.5 474.3 925.5 474.3 L887.5 474.3 Q885.5 474.3 885.1 472.3 L877.1 421.3 L873.7 421.3 Q871.7 421.3 871.7 419.3 L871.7 407.8 Q871.7 405.8 873.7 405.8 L884.7 405.8 C874 396 862 378 862.2 362 C862.4 347 875 334.5 899.1 333"/>
<path fill="#24a660" d="M 904.48 334.17 L 909.22 337.72 L 903.81 337.22 Z"/></svg>
<div class="a" style="left:1px;top:66px;width:1157px;height:1px;background:#4dffff"></div>
<div class="a" style="left:1px;top:451px;width:1157px;height:1px;background:#4dffff"></div><div class="a" style="left:0;top:0;width:1px;height:649px;background:#6a6a6a"></div>
</div>
<div id="vscroll" class="a"></div>
<div class="a" style="left:1246px;top:413px;width:15px;height:15px;background:#9c9c9c"></div>
<div class="a" style="left:1248px;top:91px;border:5.5px solid transparent;border-bottom:6px solid #ededed;border-top:none"></div>
<div class="a" style="left:1248px;top:739px;border:5.5px solid transparent;border-top:6px solid #ededed;border-bottom:none"></div>
<div id="rsep" class="a"></div><div id="right" class="a"></div><div id="righthead" class="a"></div>
<div class="rs" style="top:145.5px"></div><div class="rs" style="top:242.5px"></div><div class="rs" style="top:339.5px"></div><div class="rs" style="top:408.5px"></div><div class="rs" style="top:449.5px"></div><div class="rs" style="top:547px"></div><div class="rs" style="top:587.5px"></div>
<div class="grip" style="left:1273px;top:82px"></div><div class="grip" style="left:1273px;top:151px"></div><div class="grip" style="left:1273px;top:248px"></div><div class="grip" style="left:1273px;top:345px"></div><div class="grip" style="left:1273px;top:414px"></div><div class="grip" style="left:1273px;top:455px"></div><div class="grip" style="left:1273px;top:552px"></div>
<svg width="44" height="702" viewBox="1258 66 44 702" style="left:1258px;top:66px">
<defs>
<linearGradient id="rg1" x1="0" y1="0" x2="1" y2="1"><stop offset="0" stop-color="#e6e6e6"/><stop offset="0.5" stop-color="#9a9a9a"/><stop offset="1" stop-color="#1e1e1e"/></linearGradient>
<linearGradient id="rg2" x1="0" y1="0" x2="1" y2="0"><stop offset="0" stop-color="#2e2e2e"/><stop offset="1" stop-color="#cfcfcf"/></linearGradient>
</defs>
<path d="M1289.8 71.5 L1293 68.8 L1293 74.3 Z M1294 71.5 L1297.2 68.8 L1297.2 74.3 Z" fill="#cfcfcf"/>
<!-- R1 -->
<g transform="translate(1258,76) scale(0.1041667)">
<path d="M150 258 C148 222 182 212 218 226 C222 190 272 178 304 196 C340 214 346 262 320 292 C290 326 200 326 166 296 C154 285 150 272 150 258 Z" fill="#c6c6c6"/>
<g fill="#555"><circle cx="188" cy="266" r="13"/><circle cx="234" cy="286" r="13"/><circle cx="280" cy="278" r="12"/><circle cx="308" cy="250" r="11"/><circle cx="290" cy="222" r="10"/></g>
<path d="M166 432 A160 160 0 0 1 324 590 L166 590 Z" fill="url(#rg1)" stroke="#d4d4d4" stroke-width="9" stroke-linejoin="miter"/>
</g>
<!-- R2 -->
<g transform="translate(1258,150) scale(0.1302083)">
<rect x="132" y="118" width="120" height="80" fill="#cfcfcf"/>
<rect x="140" y="124" width="30" height="30" fill="#1e1e1e"/><rect x="178" y="124" width="30" height="30" fill="#4a4a4a"/><rect x="216" y="124" width="30" height="30" fill="#8a8a8a"/>
<rect x="140" y="162" width="30" height="30" fill="#8a8a8a"/><rect x="178" y="162" width="30" height="30" fill="#666"/><rect x="216" y="162" width="30" height="30" fill="#333"/>
<rect x="160" y="386" width="62" height="58" fill="#bebebe"/>
<path d="M178 384 L150 335" stroke="#bdbdbd" stroke-width="9"/><path d="M136 312 C150 320 160 335 156 350 C140 350 130 335 136 312 Z" fill="#d0d0d0"/>
<path d="M188 384 L188 296" stroke="#d4d4d4" stroke-width="12"/><path d="M188 350 L188 384" stroke="#3a3a3a" stroke-width="5"/>
<path d="M204 384 L228 345" stroke="#bdbdbd" stroke-width="9"/><path d="M215 335 C225 320 245 322 252 338 C240 352 225 352 215 335 Z" fill="#d0d0d0"/>
<circle cx="191" cy="556" r="29" fill="#b6b6b6"/><circle cx="161" cy="594" r="29" fill="#b6b6b6"/><circle cx="222" cy="594" r="29" fill="#b6b6b6"/>
<path d="M191 590 L160 646 L224 646 Z" fill="#b6b6b6"/>
</g>
<!-- R3 -->
<g transform="translate(1258,244) scale(0.1302083)">
<rect x="128" y="127" width="136" height="8" fill="#d8d8d8"/><rect x="128" y="160" width="136" height="20" fill="#d8d8d8"/><rect x="128" y="200" width="136" height="23" fill="#b0b0b0"/>
<rect x="134" y="348" width="126" height="87" fill="url(#rg2)" stroke="#c8c8c8" stroke-width="8"/>
<circle cx="170" cy="596" r="46" fill="#bebebe"/>
<circle cx="210" cy="628" r="44" fill="#7c7c7c" fill-opacity="0.75" stroke="#d8d8d8" stroke-width="9"/>
</g>
<!-- R4 -->
<g transform="translate(1258,338) scale(0.15625)">
<circle cx="164" cy="168" r="36" fill="#bcbcbc"/>
<circle cx="164" cy="168" r="52" fill="none" stroke="#d4d4d4" stroke-width="8" stroke-dasharray="20 9"/>
<rect x="132" y="301" width="84" height="84" fill="#4a4a4a" stroke="#d0d0d0" stroke-width="7"/>
<rect x="128" y="364" width="36" height="36" fill="#bdbdbd"/>
<rect x="111" y="347" width="36" height="36" fill="#5a5a5a" stroke="#d8d8d8" stroke-width="7"/>
<rect x="105" y="551" width="66" height="84" fill="none" stroke="#d4d4d4" stroke-width="7"/>
<rect x="132" y="600" width="84" height="62" fill="#4a4a4a" stroke="#d4d4d4" stroke-width="7"/>
</g>
<!-- R5 -->
<g transform="translate(1258,448) scale(0.1953125)">
<rect x="98" y="102" width="64" height="64" fill="#585858" stroke="#d0d0d0" stroke-width="5" stroke-dasharray="7 6"/>
<g fill="#dcdcdc"><rect x="91" y="95" width="14" height="14"/><rect x="123" y="95" width="14" height="14"/><rect x="155" y="95" width="14" height="14"/><rect x="91" y="127" width="14" height="14"/><rect x="155" y="127" width="14" height="14"/><rect x="91" y="159" width="14" height="14"/><rect x="123" y="159" width="14" height="14"/><rect x="155" y="159" width="14" height="14"/></g>
<rect x="127" y="131" width="6" height="6" fill="#ccc"/>
<rect x="95" y="238" width="6" height="78" fill="#d4d4d4"/><rect x="108" y="248" width="42" height="27" fill="#c2c2c2"/><rect x="108" y="285" width="62" height="26" fill="#c2c2c2"/>
<rect x="93" y="385" width="48" height="46" fill="#bdbdbd"/><rect x="118" y="410" width="52" height="52" fill="#cfcfcf"/><rect x="118" y="410" width="23" height="21" fill="#6a6a6a" stroke="#3c3c3c" stroke-width="5"/>
<path d="M86 640 L132 668 L178 640 L160 630 L132 646 L104 630 Z" fill="#b8b8b8"/>
<path d="M132 590 L178 618 L132 646 L86 618 Z" fill="#d4d4d4"/>
</g>
</svg>

<div id="status" class="a"></div>
<div class="a" style="left:1245px;top:751px;width:17px;height:17px;background:#4b4b4b;border-top:1px solid #333"></div>
<div class="a" style="left:77px;top:753px;width:42px;height:15px;background:#b0b0b0"></div>
<div class="a" style="left:119px;top:752px;width:14px;height:16px;background:#555;border-left:1px solid #333"></div>
<div class="a" style="left:122px;top:758px;border:4px solid transparent;border-top:5px solid #f0f0f0;border-bottom:none"></div>
<div class="a" style="left:134px;top:752px;width:42px;height:16px;background:#484848"></div>
<div class="a" style="left:177px;top:753px;width:42px;height:15px;background:#b0b0b0"></div>
<div class="a" style="left:219px;top:752px;width:14px;height:16px;background:#555;border-left:1px solid #333"></div>
<div class="a" style="left:222px;top:758px;border:4px solid transparent;border-top:5px solid #f0f0f0;border-bottom:none"></div>
<div class="a" style="left:234px;top:752px;width:42px;height:16px;background:#484848"></div>
<div class="a" style="left:276px;top:752px;width:218px;height:16px;background:#484848;border-left:1px solid #2e2e2e"></div><div class="a" style="left:476px;top:752px;width:18px;height:16px;background:#4f4f4f;border-left:1px solid #5a5a5a"></div>
<svg width="150" height="16" viewBox="134 752 150 16" style="left:134px;top:752px">
<g fill="#6e6e6e">
<rect x="142.5" y="756" width="1.5" height="8"/><path d="M150 756 L150 764 L144.5 760 Z"/>
<path d="M165 756 L165 764 L159.5 760 Z"/>
<path d="M243 756 L243 764 L248.5 760 Z"/>
<path d="M258 756 L258 764 L263.5 760 Z"/><rect x="264" y="756" width="1.5" height="8"/>
</g>
</svg>
<div class="a" style="left:483px;top:755.5px;border:4.2px solid transparent;border-left:5.6px solid #e4e4e4;border-right:none"></div>
<div class="a" style="left:494px;top:752px;width:751px;height:16px;background:#363636;border-left:1px solid #2a2a2a"></div>
<div class="a" style="left:499.6px;top:754.6px;border:5.2px solid transparent;border-right:6.6px solid #ededed;border-left:none"></div>
<div class="a" style="left:1233px;top:754.6px;border:5.2px solid transparent;border-left:6.6px solid #ededed;border-right:none"></div>
<div class="a" style="left:852px;top:752px;width:15px;height:15px;background:#989898"></div>

<div class="a" style="left:0;top:767px;width:1302px;height:1px;background:#2a2a2a"></div>
<span id="m0" class="tx" style="left:45px;top:7.5px;font-size:12px;line-height:16px;color:#e0e0e0;font-weight:normal;letter-spacing:-0.169px;">Fichier</span>
<span id="m1" class="tx" style="left:97.5px;top:7.5px;font-size:12px;line-height:16px;color:#e0e0e0;font-weight:normal;letter-spacing:-0.117px;">Edition</span>
<span id="m2" class="tx" style="left:151px;top:7.5px;font-size:12px;line-height:16px;color:#e0e0e0;font-weight:normal;letter-spacing:0.078px;">Objet</span>
<span id="m3" class="tx" style="left:198px;top:7.5px;font-size:12px;line-height:16px;color:#e0e0e0;font-weight:normal;letter-spacing:-0.172px;">Texte</span>
<span id="m4" class="tx" style="left:244px;top:7.5px;font-size:12px;line-height:16px;color:#e0e0e0;font-weight:normal;letter-spacing:-0.234px;">Sélection</span>
<span id="m5" class="tx" style="left:310px;top:7.5px;font-size:12px;line-height:16px;color:#e0e0e0;font-weight:normal;letter-spacing:-0.117px;">Effet</span>
<span id="m6" class="tx" style="left:351px;top:7.5px;font-size:12px;line-height:16px;color:#e0e0e0;font-weight:normal;letter-spacing:0.146px;">Affichage</span>
<span id="m7" class="tx" style="left:419px;top:7.5px;font-size:12px;line-height:16px;color:#e0e0e0;font-weight:normal;letter-spacing:-0.393px;">Fenêtre</span>
<span id="m8" class="tx" style="left:476px;top:7.5px;font-size:12px;line-height:16px;color:#e0e0e0;font-weight:normal;letter-spacing:-0.010px;">Aide</span>
<span id="ws" class="tx" style="left:930px;top:7.5px;font-size:12px;line-height:16px;color:#dcdcdc;font-weight:normal;letter-spacing:-0.322px;">Les indispensables</span>
<span id="c0" class="tx" style="left:12px;top:42.2px;font-size:9.5px;line-height:13.5px;color:#e2e2e2;font-weight:normal;letter-spacing:0.000px;transform-origin:0 50%;transform:scaleX(1.0365);">Aucune sélection</span>
<span id="c1" class="tx" style="left:184px;top:42.2px;font-size:9.5px;line-height:13.5px;color:#e8912f;font-weight:normal;letter-spacing:0.000px;transform-origin:0 50%;transform:scaleX(1.0492);">Contour :</span>
<span id="c2" class="tx" style="left:251.5px;top:42.2px;font-size:9.5px;line-height:13.5px;color:#111;font-weight:normal;letter-spacing:0.000px;transform-origin:0 50%;transform:scaleX(1.1665);">1 pt</span>
<span id="c3" class="tx" style="left:360.4px;top:42.2px;font-size:9.5px;line-height:13.5px;color:#111;font-weight:normal;letter-spacing:0.000px;transform-origin:0 50%;transform:scaleX(1.0221);">Uniforme</span>
<span id="c4" class="tx" style="left:453.3px;top:42.2px;font-size:9.5px;line-height:13.5px;color:#111;font-weight:normal;letter-spacing:0.000px;transform-origin:0 50%;transform:scaleX(1.0830);">Arrondi 5 pt</span>
<span id="c5" class="tx" style="left:543px;top:42.2px;font-size:9.5px;line-height:13.5px;color:#e8912f;font-weight:normal;letter-spacing:0.000px;transform-origin:0 50%;transform:scaleX(1.0176);">Opacité :</span>
<span id="c6" class="tx" style="left:593.5px;top:42.2px;font-size:9.5px;line-height:13.5px;color:#111;font-weight:normal;letter-spacing:0.000px;transform-origin:0 50%;transform:scaleX(0.9871);">100%</span>
<span id="c7" class="tx" style="left:663px;top:42.2px;font-size:9.5px;line-height:13.5px;color:#e2e2e2;font-weight:normal;letter-spacing:0.000px;transform-origin:0 50%;transform:scaleX(1.0225);">Style :</span>
<span id="c8" class="tx" style="left:767.5px;top:42.2px;font-size:9.5px;line-height:13.5px;color:#e6e6e6;font-weight:normal;letter-spacing:0.000px;transform-origin:0 50%;transform:scaleX(1.0496);">Format de document</span>
<span id="c9" class="tx" style="left:906px;top:42.2px;font-size:9.5px;line-height:13.5px;color:#e6e6e6;font-weight:normal;letter-spacing:0.000px;transform-origin:0 50%;transform:scaleX(1.0247);">Préférences</span>
<span id="tabt" class="tx" style="left:81px;top:68.0px;font-size:11px;line-height:15px;color:#e8e8e8;font-weight:bold;letter-spacing:-0.008px;">cactus_amandine.ai* @ 300% (CMJN/Aperçu)</span>
<span id="s0" class="tx" style="left:79.3px;top:754.5px;font-size:10px;line-height:14px;color:#111;font-weight:normal;letter-spacing:-0.126px;">300%</span>
<span id="s1" class="tx" style="left:180.6px;top:754.5px;font-size:10px;line-height:14px;color:#111;font-weight:normal;letter-spacing:0.000px;">1</span>
<span id="s2" class="tx" style="left:355.6px;top:754.0px;font-size:10px;line-height:14px;color:#e0e0e0;font-weight:normal;letter-spacing:-0.280px;">Sélection</span>
</body></html>
